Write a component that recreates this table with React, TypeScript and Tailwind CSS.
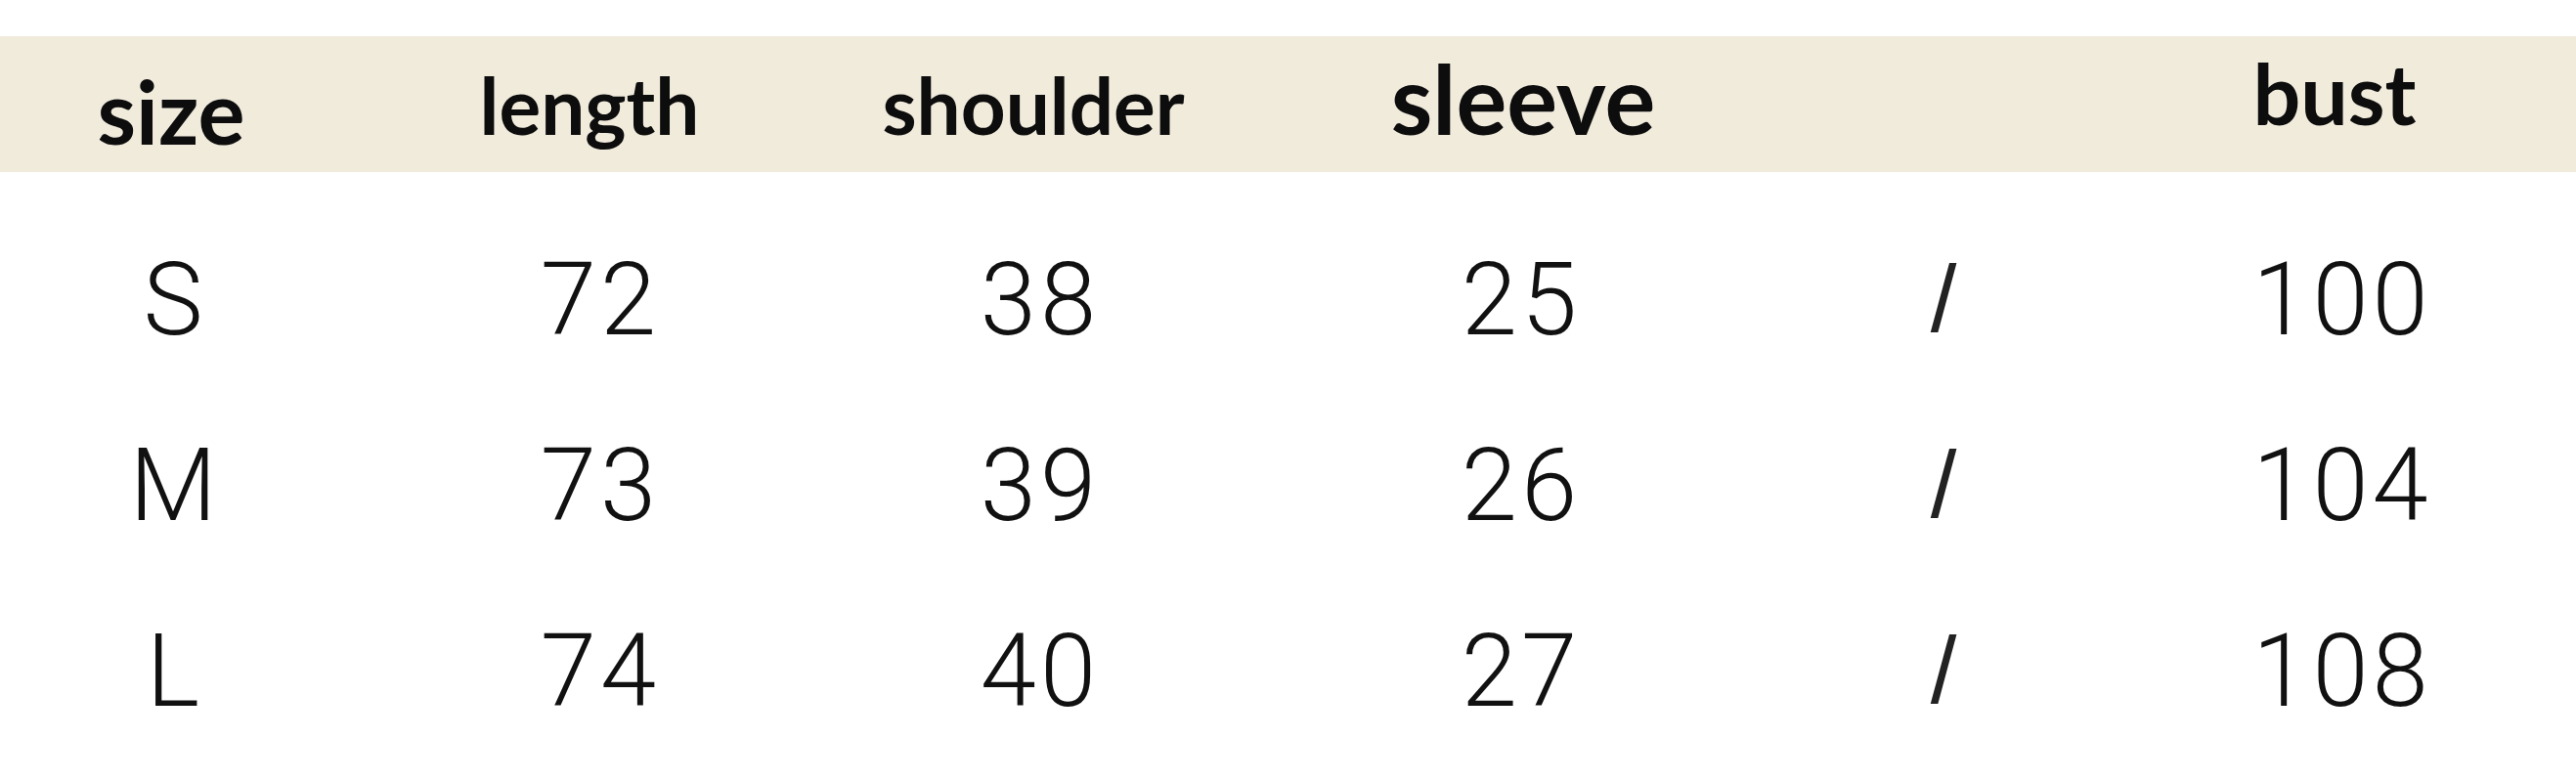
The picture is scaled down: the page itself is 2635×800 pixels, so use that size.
const headers = [
  { label: "size", cls: "text-[90px] pt-[31px] pl-[0px]" },
  { label: "length", cls: "text-[80px] pt-[30px] pr-[14px]" },
  { label: "shoulder", cls: "text-[80px] pt-[30px] pr-[6px]" },
  { label: "sleeve", cls: "text-[97px] pt-[15px] pl-[12px]" },
  { label: "", cls: "text-[80px] pt-[30px]" },
  { label: "bust", cls: "text-[86px] pt-[15px] pr-[8px]" },
];

const rows = [
  ["S", "72", "38", "25", "/", "100"],
  ["M", "73", "39", "26", "/", "104"],
  ["L", "74", "40", "27", "/", "108"],
];

const cols = "grid grid-cols-[350px_520px_380px_604px_268px_540px]";

export default function App() {
  return (
    <div className="w-[2635px] h-[800px] bg-white overflow-hidden pt-[37px]">
      {/* header band */}
      <div className={`${cols} h-[139px] bg-[#f1ebdc]`}>
        {headers.map((h, i) => (
          <div
            key={i}
            className={`flex justify-center items-start font-bold leading-none text-[#0d0d0d] font-['Lato',sans-serif] ${h.cls}`}
          >
            {h.label}
          </div>
        ))}
      </div>
      <div className="pt-[35px]">
        {rows.map((r, ri) => (
          <div key={ri} className={`${cols} h-[190px]`}>
            {r.map((v, ci) =>
              v === "/" ? (
                <div
                  key={ci}
                  className="flex justify-center items-center text-[96px] leading-none text-[#222] font-['Liberation_Sans',Arial,sans-serif]"
                >
                  {v}
                </div>
              ) : (
                <div
                  key={ci}
                  className="flex justify-center items-center pl-[8px] text-[103px] font-light tracking-[4px] leading-none text-[#111] font-['Roboto',sans-serif]"
                >
                  {v}
                </div>
              )
            )}
          </div>
        ))}
      </div>
    </div>
  );
}
